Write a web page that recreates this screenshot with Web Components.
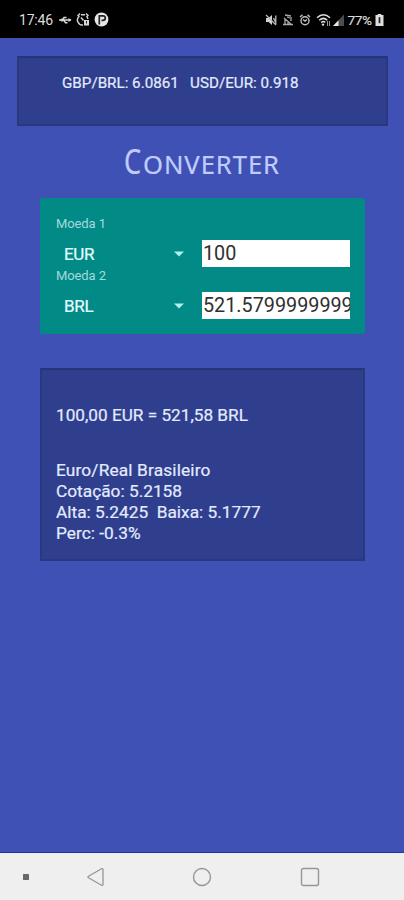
<!DOCTYPE html>
<html lang="pt-BR">
<head>
<meta charset="utf-8">
<title>Converter</title>
<style>
html,body{margin:0;height:100%;background:#3f51b5}
body{font-family:Roboto,"Liberation Sans",sans-serif;overflow:hidden}
</style>
</head>
<body>
<currency-app></currency-app>
<script>
const define = (name, html, setup) => customElements.define(name, class extends HTMLElement {
  constructor() {
    super();
    this.attachShadow({ mode: "open" }).innerHTML = html;
  }
  connectedCallback() { if (setup) setup(this, this.shadowRoot); }
});

define("status-bar", `
<style>
:host{display:flex;align-items:center;box-sizing:border-box;height:38px;padding:2px 20px 0 19px;background:#000;color:#dcdcdc;font-size:14px;line-height:18px}
svg{display:block;flex:none}
.t{letter-spacing:-.2px;width:38.5px}
.l{display:flex;align-items:center;gap:4px;margin-top:-1px}
.r{display:flex;align-items:center;margin-left:auto}
.p{font-size:13.6px;letter-spacing:-.4px;margin-left:3px;width:27.5px;white-space:nowrap;-webkit-text-stroke:.2px}
</style>
<span class="t">17:46</span>
<span class="l">
<svg width="14" height="14" viewBox="0 0 14 14" fill="none" stroke="#d8d8d8" stroke-width="1.500"><path d="M1 7h12M4.500 7l1.500-2.500h2.500M5.500 7l2 2.700h2"/><circle cx="4" cy="7" r="1.500" fill="#d8d8d8" stroke="none"/><path d="M10.500 5l3 2-3 2z" fill="#d8d8d8" stroke="none"/></svg>
<svg width="14" height="15" viewBox="0 0 14 15" fill="none" stroke="#cfcfcf" stroke-width="1.500"><path d="M1.500 4l2.500-2.500M10 1.500L12.500 4M5 2.700h4M7 13a5 5 0 0 1-3.500-9M10.500 4a5 5 0 0 1 1.300 3M5 5.500l2.500 3"/><path d="M8 8h5v5.500H8z" fill="#d8d8d8" stroke="none"/><path d="M10.500 9v2.500" stroke="#222" stroke-width="1"/></svg>
<svg width="15" height="15" viewBox="0 0 15 15"><circle cx="7.500" cy="7.500" r="6.900" fill="#e6e6e6"/><path d="M5.300 12.500V3.800H9a2.300 2.300 0 0 1 0 4.600H7.500" fill="none" stroke="#222" stroke-width="1.700"/></svg>
</span>
<span class="r">
<svg width="12" height="14" viewBox="0 0 12 14"><path d="M1 5h2.500L7 2v10L3.500 9H1z" fill="#d0d0d0"/><path d="M8.500 5l2 4M10.800 2.500v9M1 2l10 10" stroke="#bbb" stroke-width="1.300" fill="none"/></svg>
<svg width="12" height="14" viewBox="0 0 12 14" style="margin-left:5px" fill="none" stroke="#a8a8a8" stroke-width="1.300"><path d="M3 2l6 1M2 5l8 7M3 6v5M9 4v4M1 11.500h10M5 4l3 1M6 8v3"/></svg>
<svg width="12" height="14" viewBox="0 0 12 14" style="margin-left:5px" fill="none" stroke="#c2c2c2" stroke-width="1.400"><circle cx="6" cy="7.800" r="4"/><path d="M1 4l2.500-2.200M11 4L8.500 1.800M4 6.500l2 1.500 2-1.500"/></svg>
<svg width="15" height="14" viewBox="0 0 15 14" style="margin-left:5px" fill="none" stroke="#dedede" stroke-width="1.500"><path d="M1 4.800q6.500-6 13 0M3.200 7.300q4.300-3.800 8 0M5.200 9.600q2.300-2 4 0"/><circle cx="7" cy="11.600" r="1.200" fill="#dedede" stroke="none"/><path d="M11.500 8v5M13.500 8v5" stroke="#999" stroke-width="1"/></svg>
<svg width="13" height="14" viewBox="0 0 13 14" style="margin-left:1px"><path d="M1 13L12 1.500V13z" fill="#4d4d4d"/><path d="M1 13l5.500-5.700V13z" fill="#e6e6e6"/></svg>
<span class="p">77%</span>
<svg width="9" height="14" viewBox="0 0 9 14"><path d="M2.700 1h3.600v1H8.500v11H.5V2h2.200z" fill="#dedede"/><path d="M4.500 4.200v6" stroke="#222" stroke-width="1.700"/></svg>
</span>`);

define("info-panel", `
<style>
:host{display:block;box-sizing:border-box;background:#303f8d;border:2px solid #2a387f;border-top-color:#26347a;color:#e3ebff;border-radius:1px;-webkit-text-stroke:.2px}
</style><slot></slot>`);

define("app-title", `
<style>
:host{display:block;color:#c0cdfc;font-family:"Noto Sans","Open Sans",sans-serif;white-space:nowrap}
h1{display:flex;justify-content:center;align-items:baseline;font:inherit;font-size:25.6px;line-height:40px;margin:0;letter-spacing:.95px;text-transform:uppercase;-webkit-text-stroke:.2px}
.c{font-size:34px;letter-spacing:0;width:19px;transform:scaleX(.8);transform-origin:0 0}
</style><h1><span class="c"></span><span class="rest"></span></h1>`, (el, root) => {
  const text = el.getAttribute("text");
  root.querySelector(".c").textContent = text[0];
  root.querySelector(".rest").textContent = text.slice(1);
});

define("currency-row", `
<style>
:host{display:grid;grid-template-columns:146px 148px;height:52px}
label{display:block;font-size:13px;letter-spacing:-.1px;line-height:16px;color:#a4d9dc}
.sel{display:flex;align-items:center;justify-content:space-between;padding:0 18px 0 8px;height:30px;margin-top:7px;font-size:17px;letter-spacing:-.3px;color:#e6ffff;-webkit-text-stroke:.2px}
svg{display:block}
.val{box-sizing:border-box;height:27px;margin-top:24px;padding-left:1px;background:#fff;color:#303030;font-size:19.8px;line-height:28px;overflow:hidden;white-space:nowrap}
</style>
<div><label></label><div class="sel"><span></span><svg width="10" height="6" viewBox="0 0 10 6"><path d="M0 .5h10L5 5.500z" fill="#b2f0ee"/></svg></div></div>
<div class="val"></div>`, (el, root) => {
  root.querySelector("label").textContent = el.getAttribute("label");
  root.querySelector(".sel span").textContent = el.getAttribute("code");
  root.querySelector(".val").textContent = el.getAttribute("value");
});

define("converter-card", `
<style>
:host{display:block;box-sizing:border-box;height:136px;padding:18px 15px 0 16px;background:#028a87;border-radius:2px}
</style><slot></slot>`);

define("nav-bar", `
<style>
:host{display:grid;grid-template-columns:52px 86px 128px 88px;height:47px;background:#efefef;border-top:1px solid #e6f0fb;box-shadow:0 -1px #2133a0;align-items:center;box-sizing:border-box}
svg{display:block;margin:0 auto 1px}
</style>
<svg width="20" height="20"><rect x="7" y="7" width="6" height="6" rx=".5" fill="#686868"/></svg>
<svg width="20" height="20" viewBox="0 0 20 20" fill="none" stroke="#969696" stroke-width="1.300" stroke-linejoin="round"><path d="M3.500 9.200L16.500 1.800q1.500-.6 1.500 1v14.400q0 1.600-1.500 1L3.500 10.800q-1.200-.8 0-1.600z"/></svg>
<svg width="20" height="20" fill="none" stroke="#969696" stroke-width="1.400"><circle cx="10" cy="10" r="8.500"/></svg>
<svg width="20" height="20" fill="none" stroke="#969696" stroke-width="1.400"><rect x="1.500" y="1.500" width="17" height="17" rx="2"/></svg>`);

define("currency-app", `
<style>
:host{display:flex;flex-direction:column;height:900px;width:404px;background:#3f51b5}
main{flex:1;display:flex;flex-direction:column}
.ticker{margin:18px 16px 0 17px;height:70px;padding:15px 0 0 43px;font-size:15.2px;line-height:20px}
app-title{margin-top:15px;height:57px}
converter-card{margin:0 39px 0 40px}
.result{margin:34px 39px 0 40px;height:193px;padding:35px 0 0 14px;font-size:17.3px;line-height:21px}
p{margin:0;white-space:pre}
.sum{font-size:17.2px}
.q{margin-top:34px;letter-spacing:.15px}
</style>
<status-bar></status-bar>
<main>
<info-panel class="ticker"><p>GBP/BRL: 6.0861   USD/EUR: 0.918</p></info-panel>
<app-title text="Converter"></app-title>
<converter-card>
<currency-row label="Moeda 1" code="EUR" value="100"></currency-row>
<currency-row label="Moeda 2" code="BRL" value="521.5799999999"></currency-row>
</converter-card>
<info-panel class="result"><p class="sum">100,00 EUR = 521,58 BRL</p><p class="q">Euro/Real Brasileiro</p><p>Cotação: 5.2158</p><p>Alta: 5.2425  Baixa: 5.1777</p><p>Perc: -0.3%</p></info-panel>
</main>
<nav-bar></nav-bar>`);
</script>
</body>
</html>
